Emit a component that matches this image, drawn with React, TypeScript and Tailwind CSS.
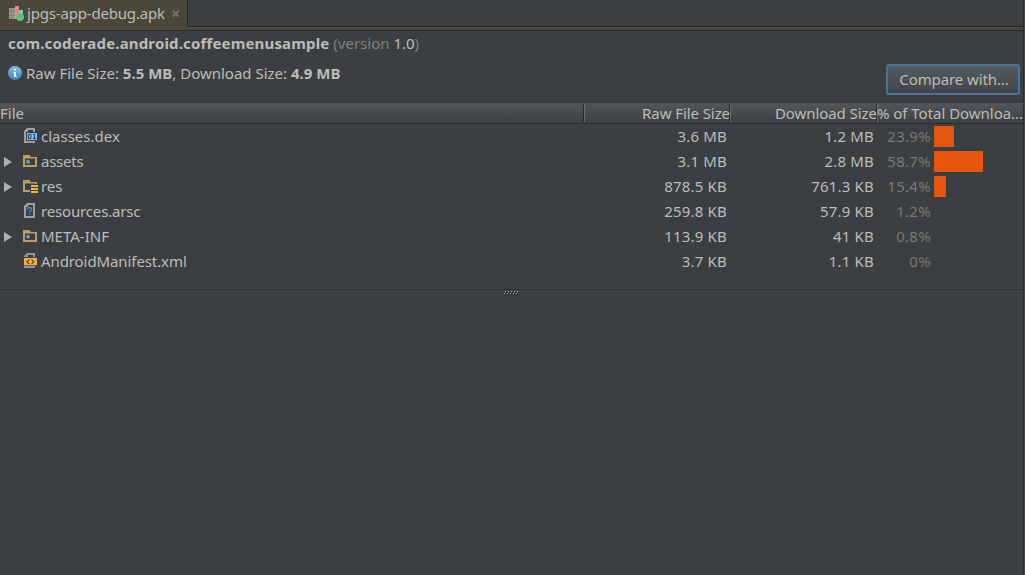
type IconKind = 'dex' | 'folder' | 'res' | 'unknown' | 'xml';

interface Entry {
  name: string;
  icon: IconKind;
  expandable?: boolean;
  raw: string;
  download: string;
  percent: string;
  bar: number;
}

const entries: Entry[] = [
  { name: 'classes.dex', icon: 'dex', raw: '3.6 MB', download: '1.2 MB', percent: '23.9%', bar: 20 },
  { name: 'assets', icon: 'folder', expandable: true, raw: '3.1 MB', download: '2.8 MB', percent: '58.7%', bar: 49 },
  { name: 'res', icon: 'res', expandable: true, raw: '878.5 KB', download: '761.3 KB', percent: '15.4%', bar: 12 },
  { name: 'resources.arsc', icon: 'unknown', raw: '259.8 KB', download: '57.9 KB', percent: '1.2%', bar: 0 },
  { name: 'META-INF', icon: 'folder', expandable: true, raw: '113.9 KB', download: '41 KB', percent: '0.8%', bar: 0 },
  { name: 'AndroidManifest.xml', icon: 'xml', raw: '3.7 KB', download: '1.1 KB', percent: '0%', bar: 0 },
];

const nameTracking: Record<IconKind, string> = {
  dex: 'tracking-normal',
  folder: 'tracking-normal',
  res: 'tracking-[-0.1px]',
  unknown: 'tracking-[-0.16px]',
  xml: 'tracking-[-0.09px]',
};

function FolderIcon({ res }: { res?: boolean }) {
  return (
    <>
      <path d="M1 2h6.500l1.500 2h6v10H1z" fill="#c29a60" />
      <path d="M3 5.500h10V12H3z" fill="#3c3f41" />
      {res ? (
        <>
          <path d="M8 6h8v10H8z" fill="#3c3f41" />
          <path d="M9 7h7v2H9zM9 10h7v2H9zM9 13h7v2H9z" fill="#f5bd2c" />
          <path d="M11.500 7v2M14 7v2M11.500 10v2M14 10v2M11.500 13v2M14 13v2" stroke="#d19a1f" strokeWidth=".6" />
        </>
      ) : (
        <circle cx="6" cy="8.700" r="2" fill="#5ba0c5" />
      )}
    </>
  );
}

function FileIcon({ kind }: { kind: IconKind }) {
  return (
    <svg width="16" height="16" viewBox="0 0 16 16" className="shrink-0">
      {(kind === 'folder' || kind === 'res') && <FolderIcon res={kind === 'res'} />}
      {kind === 'dex' && (
        <>
          <path d="M5 0h8v15H2V3z" fill="#9c9e9f" />
          <path d="M6 2h5v11H4V4h2z" fill="#3c3f41" />
          <path d="M4 4H16v9H4z" fill="#3c3f41" />
          <path d="M5 5h10v7H5z" fill="#78baeb" />
          <path d="M6.500 6.500H9v4H6.500zM11 6.500h1.500V10.500M11 10.500h3" fill="none" stroke="#22445c" strokeWidth="1" />
        </>
      )}
      {kind === 'unknown' && (
        <>
          <path d="M5 0h8v15H2V3z" fill="#9c9e9f" />
          <path d="M6 2h5v11H4V4h2z" fill="#393f43" />
          <path d="M5.400 6.500q0-1.900 2-1.900t2 1.600q0 .9-1 1.700t-1 1.700M7.400 10.600V12" fill="none" stroke="#4895c5" strokeWidth="1.300" />
        </>
      )}
      {kind === 'xml' && (
        <>
          <path d="M5 0h8v4H11V2H6v2H2V3z" fill="#929597" />
          <path d="M2 13h11v2H2z" fill="#929597" />
          <path d="M2 5h13v7.300H2z" fill="#f3ab4b" />
          <path d="M7.300 6.300L4.900 8.700l2.400 2.400M9.500 6.300l2.400 2.400-2.400 2.400" fill="none" stroke="#594522" strokeWidth="1.200" />
        </>
      )}
    </svg>
  );
}

function ApkIcon() {
  return (
    <svg width="16" height="16" viewBox="0 0 16 16" className="mt-1.5 shrink-0">
      <path d="M1 2h6v11H1z" fill="#9b9b97" />
      <path d="M3 2v11M5 2v11M1 5.500h6M1 9.500h6" stroke="#77776f" strokeWidth=".6" />
      <path d="M7 0h4v13H7z" fill="#ee8685" />
      <path d="M7 5h4" stroke="#c96968" strokeWidth=".6" />
      <path d="M11 4h4v4h-4z" fill="#82c2ee" />
      <circle cx="12" cy="11" r="4" fill="#60c573" />
    </svg>
  );
}

function Tabs() {
  return (
    <div className="flex h-[31px] shrink-0 border-b border-[#282828] bg-[#4b4739]">
      <div className="flex w-[187px] items-start pl-2">
        <ApkIcon />
        <span className="ml-[3px] mt-[3px] w-[138px] tracking-[-0.18px] whitespace-nowrap">jpgs-app-debug.apk</span>
        <svg width="8" height="8" viewBox="0 0 8 8" className="ml-[7px] mt-[10px]">
          <path d="M.7.700l6 6M6.700.700l-6 6" stroke="#77756d" strokeWidth="1.800" />
        </svg>
      </div>
      <div className="h-[27px] flex-1 border-b border-l border-[#282828] bg-[#3c3f41]" />
    </div>
  );
}

const columns = 'grid grid-cols-[584px_146px_147px_146px]';

export default function App() {
  return (
    <div className="flex h-[575px] w-[1025px] overflow-hidden bg-[#3c3f41] font-['Noto_Sans',sans-serif] text-[15px] leading-5 text-[#bbbbbb]">
      <main className="flex w-[1023px] flex-col">
        <Tabs />
        <section className="flex h-[72px] shrink-0 justify-between pl-2 pr-[3px]">
          <div className="pt-[2px]">
            <p className="whitespace-nowrap">
              <b className="tracking-[0.16px]">com.coderade.android.coffeemenusample</b>
              <span className="text-[#808080]"> (version </span>1.0<span className="text-[#808080]">)</span>
            </p>
            <div className="mt-[10px] flex items-center whitespace-nowrap">
              <svg width="14" height="14" viewBox="0 0 14 14" className="mr-1">
                <defs>
                  <linearGradient id="info" x1="0" y1="0" x2="0" y2="1">
                    <stop stopColor="#80c3e9" />
                    <stop offset="1" stopColor="#3d83b3" />
                  </linearGradient>
                </defs>
                <circle cx="7" cy="7" r="7" fill="url(#info)" />
                <path d="M6 3h2v1.500H6zM5.500 6H8v4h.8v1H5.500v-1H6V7h-.5z" fill="white" />
              </svg>
              <p>Raw File Size: <b>5.5 MB</b>, Download Size: <b>4.9 MB</b></p>
            </div>
          </div>
          <button className="mt-[33px] flex h-[31px] w-[134px] items-center justify-center rounded-[3px] border-2 border-[#4874a1] bg-linear-to-b from-[#555a5c] to-[#414648] pb-px pl-[2px] tracking-[-0.1px] whitespace-nowrap">
            Compare with...
          </button>
        </section>
        <section className="flex shrink-0 flex-col">
          <div className={`${columns} h-[21px] border-b border-[#2b2c2d] bg-linear-to-b from-[#535759] to-[#3d4042] whitespace-nowrap`}>
            <div className="my-px h-[18px] border-r border-[#28292a] leading-[18px]">File</div>
            <div className="my-px flex h-[18px] justify-end border-l border-[#686b6d] border-r border-r-[#28292a] leading-[18px] tracking-[-0.08px]">
              <span className="-mr-px">Raw File Size</span>
            </div>
            <div className="my-px flex h-[18px] justify-end border-l border-[#686b6d] border-r border-r-[#28292a] leading-[18px] tracking-[-0.06px]">
              <span className="-mr-px">Download Size</span>
            </div>
            <div className="my-px h-[18px] border-l border-[#686b6d] leading-[18px] tracking-[-0.03px]">
              <span className="-ml-px">% of Total Downloa...</span>
            </div>
          </div>
          {entries.map((entry) => (
            <div key={entry.name} className={`${columns} h-[25px] whitespace-nowrap`}>
              <div className="flex items-start">
                <div className="flex h-[25px] w-[22px] items-center pl-1">
                  {entry.expandable && (
                    <svg width="8" height="10" viewBox="0 0 8 10">
                      <path d="M0 0l8 5-8 5z" fill="#acaeaf" />
                    </svg>
                  )}
                </div>
                <div className="mr-[3px] mt-1 flex"><FileIcon kind={entry.icon} /></div>
                <span className={`mt-[2px] ${entry.name === 'assets' ? 'tracking-[-0.25px]' : nameTracking[entry.icon]}`}>{entry.name}</span>
              </div>
              <div className="pr-[3px] pt-[2px] text-right tracking-[0.18px]">{entry.raw}</div>
              <div className="pr-[3px] pt-[2px] text-right tracking-[0.18px]">{entry.download}</div>
              <div className="flex items-start pt-[2px]">
                <span className="w-[54px] text-right tracking-[0.3px] text-[#787878]">{entry.percent}</span>
                <span className="ml-[3px] h-[21px] bg-[#e6550d]" style={{ width: entry.bar }} />
              </div>
            </div>
          ))}
        </section>
        <div className="mt-[15px] flex h-2 shrink-0 justify-center border-t border-[#303234]">
          <svg width="16" height="5" viewBox="0 0 16 5" className="mr-[2px] mt-px">
            <path d="M2 0h1v1H2zM5 0h1v1H5zM8 0h1v1H8zM11 0h1v1h-1zM14 0h1v1h-1zM1 2h1v1H1zM4 2h1v1H4zM7 2h1v1H7zM10 2h1v1h-1zM13 2h1v1h-1z" fill="#b6b7b7" />
            <path d="M3 1h1v1H3zM6 1h1v1H6zM9 1h1v1H9zM12 1h1v1h-1zM2 3h1v1H2zM5 3h1v1H5zM8 3h1v1H8zM11 3h1v1h-1zM14 3h1v1h-1z" fill="#202224" />
          </svg>
        </div>
      </main>
      <div className="w-[2px] border-l border-[#2b2b2b] bg-[#47494a]" />
    </div>
  );
}
